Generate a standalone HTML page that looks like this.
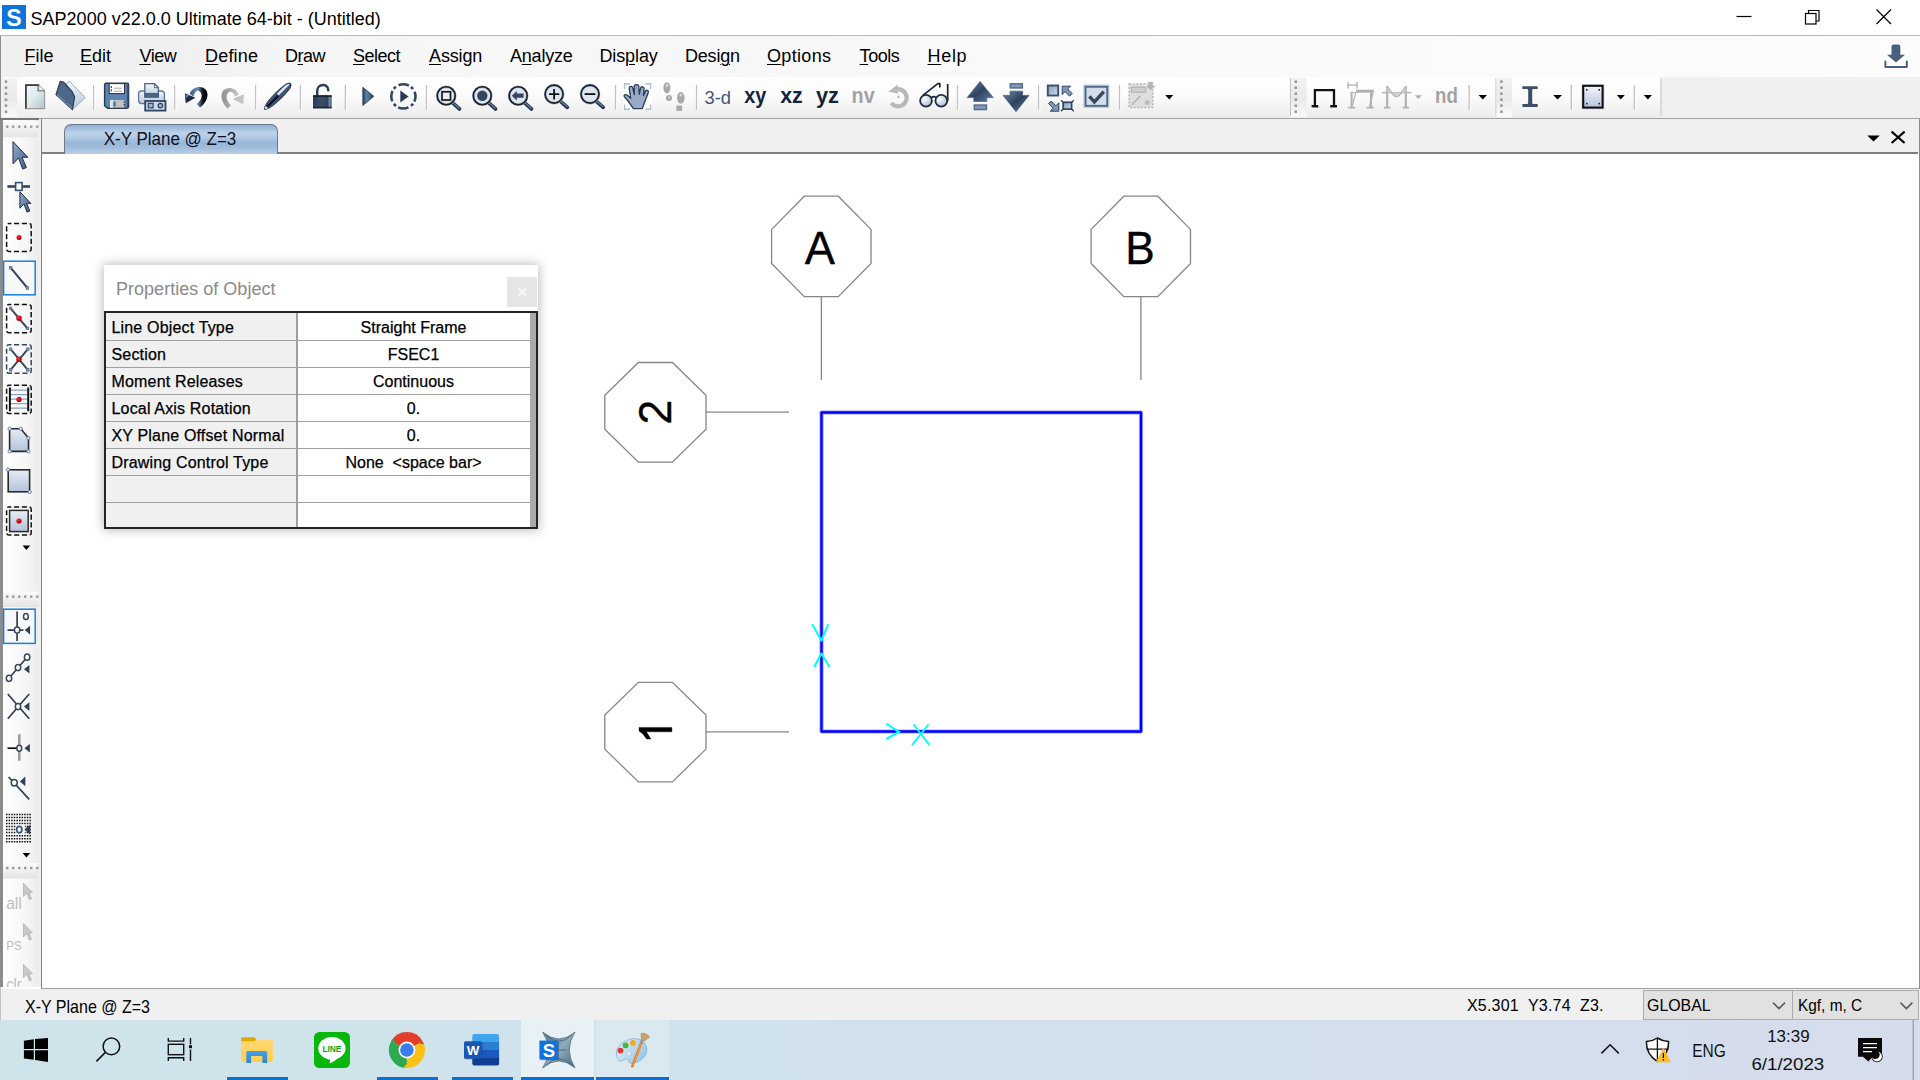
<!DOCTYPE html>
<html>
<head>
<meta charset="utf-8">
<title>SAP2000</title>
<style>
*{box-sizing:border-box;margin:0;padding:0}
html,body{width:1920px;height:1080px;overflow:hidden;background:#fff;font-family:"Liberation Sans",sans-serif;}
.abs{position:absolute}
#root{position:absolute;left:0;top:0;width:1920px;height:1080px;overflow:hidden;background:#fff}
/* title bar */
#title{left:0;top:0;width:1920px;height:36px;background:#fff}
#title .txt{left:30.6px;top:7.6px;font-size:18px;line-height:22px;color:#000;white-space:nowrap;letter-spacing:0}
#appico{left:2px;top:5px;width:24px;height:24px;background:#0a74dc}
/* menu */
#menubar{left:0;top:35px;width:1920px;height:42px;background:linear-gradient(90deg,#f0f0f0 0,#f0f0f0 180px,#f6f6f6 300px,#fcfcfc 100%);border-top:1px solid #b9b9b9}
.mi{position:absolute;top:45px;font-size:18px;line-height:22px;color:#000;white-space:nowrap}
.mi u{text-decoration:underline;text-underline-offset:2px;text-decoration-thickness:1px}
/* toolbar */
#tbrow{left:0;top:77px;width:1920px;height:42px;background:#f0f0f0}
#tbline{left:0;top:117.6px;width:1920px;height:1.6px;background:#a3a3a3}
#tbstrip{left:3px;top:77px;width:1657px;height:41px;background:linear-gradient(180deg,#ffffff 0,#fbfbfb 45%,#ececec 100%)}
.sep{position:absolute;top:85px;width:1px;height:25px;background:#c4c4c4;box-shadow:1px 0 0 #fff}
/* left border */
#lborder{left:0;top:118px;width:2.5px;height:868.5px;background:#8c8c8c}
#rborder{left:1918.5px;top:118px;width:1.5px;height:871px;background:#8c8c8c}
/* tab strip */
#tabrow{left:0;top:119px;width:1920px;height:35px;background:#f0f0f0}
#lefttb{left:2.5px;top:118px;width:36px;height:868.5px;background:linear-gradient(90deg,#fefefe 0,#f7f7f7 60%,#ececec 100%);border-top:1.5px solid #8a8a8a}
#canvas{left:40.5px;top:118px;width:1878px;height:871px;background:#fff;border-left:1.5px solid #808080;border-bottom:1.5px solid #a0a0a0}
#tabbg{left:42px;top:118px;width:1878px;height:34.5px;background:#f0f0f0}
#lthin{left:0;top:36px;width:1px;height:82px;background:#8e8e8e}
#lthin2{left:0;top:986.5px;width:1px;height:33.5px;background:#c2c2c2}
#ltline{left:0;top:117.8px;width:38.5px;height:1.8px;background:#777}
#status{left:0;top:989px;width:1920px;height:31px;background:#f0f0f0}
#taskbar{left:0;top:1020px;width:1920px;height:60px;background:linear-gradient(90deg,#cfe4ea 0,#d0e2ec 40%,#d6dcec 100%)}

/* tab */
#tab{left:63.5px;top:123.5px;width:214px;height:30.5px;border:1.3px solid #6e7a88;border-bottom:none;border-radius:7px 7px 0 0;background:linear-gradient(180deg,#8eafd3 0,#bcd2e9 27%,#b5cde6 40%,#98b6d8 62%,#a2bedd 80%,#b9cfe7 100%)}
#tab .t{left:-1px;top:4px;width:212px;text-align:center;font-size:18.6px;line-height:20px;color:#10101c;transform:scaleX(.914)}
#tabline{left:42px;top:152px;width:1876px;height:1.7px;background:#808080}
/* drawing */
#draw{left:0;top:0;width:1920px;height:1080px;pointer-events:none}
.glab{position:absolute;-webkit-text-stroke:.35px #000;font-size:46.5px;line-height:50px;width:60px;height:50px;text-align:center;color:#000}
/* properties panel */
#pp{left:104px;top:265px;width:434px;height:264px;background:#fff;box-shadow:0 0 10px 1px rgba(0,0,0,.27)}
#pp .ttl{left:12px;top:12.5px;font-size:18px;line-height:22px;color:#8a8a8a;white-space:nowrap;letter-spacing:.02px}
#pp .cls{left:403.2px;top:12.2px;width:29.6px;height:29.6px;background:#e5e5e5;color:#f6f6f6;font-size:18px;font-weight:700;line-height:30.6px;text-align:center}
#grid{left:0;top:46px;width:434px;height:218px;background:#242424}
#grid .lc{left:2px;top:2px;width:190px;height:214px;background:#f0f0f0}
#grid .rc{left:193px;top:2px;width:233px;height:214px;background:#fff}
#grid .sb{left:426px;top:2px;width:6px;height:214px;background:#aaa}
#grid .vl{left:192px;top:2px;width:1.5px;height:214px;background:#a0a0a0}
#grid .hl{left:2px;width:425px;height:1.5px;background:#a0a0a0}
.pl,.pr{position:absolute;font-size:16px;line-height:20px;color:#000;white-space:pre;-webkit-text-stroke:.25px #000}
.pl{left:7.5px;letter-spacing:.17px}
.pr{left:193px;width:233px;text-align:center}
/* status */
.st{position:absolute;font-size:16px;line-height:20px;color:#000;white-space:pre}
.combo{position:absolute;top:989.5px;height:30.5px;background:#e1e1e1;border:1.5px solid #ababab;border-bottom-width:1px}
#gap{left:38.5px;top:119.2px;width:2px;height:867px;background:#f0f0f0}
</style>
</head>
<body>
<div id="root">
<div id="title" class="abs">
  <div class="txt abs">SAP2000 v22.0.0 Ultimate 64-bit - (Untitled)</div>
</div>
<div id="menubar" class="abs"></div>
<div class="mi" style="left:24.5px;letter-spacing:0.00px"><u>F</u>ile</div>
<div class="mi" style="left:80.0px;letter-spacing:0.00px"><u>E</u>dit</div>
<div class="mi" style="left:139.5px;letter-spacing:-0.50px"><u>V</u>iew</div>
<div class="mi" style="left:205.0px;letter-spacing:0.20px"><u>D</u>efine</div>
<div class="mi" style="left:285.0px;letter-spacing:-0.50px">D<u>r</u>aw</div>
<div class="mi" style="left:353.0px;letter-spacing:-0.50px"><u>S</u>elect</div>
<div class="mi" style="left:429.0px;letter-spacing:-0.14px"><u>A</u>ssign</div>
<div class="mi" style="left:510.0px;letter-spacing:-0.22px">A<u>n</u>alyze</div>
<div class="mi" style="left:599.4px;letter-spacing:-0.10px">Dis<u>p</u>lay</div>
<div class="mi" style="left:685.0px;letter-spacing:-0.20px">Desi<u>g</u>n</div>
<div class="mi" style="left:767.0px;letter-spacing:0.33px"><u>O</u>ptions</div>
<div class="mi" style="left:859.6px;letter-spacing:-0.45px"><u>T</u>ools</div>
<div class="mi" style="left:927.5px;letter-spacing:0.70px"><u>H</u>elp</div>
<div id="tbrow" class="abs"></div>
<div id="tbstrip" class="abs"></div>
<div id="canvas" class="abs"></div>
<div id="tabbg" class="abs"></div>
<div id="lborder" class="abs"></div>
<div id="rborder" class="abs"></div>
<div id="lefttb" class="abs"></div>
<div id="gap" class="abs"></div>
<div id="status" class="abs"></div>
<div id="tabline" class="abs"></div><div id="tab" class="abs"><div class="t abs">X-Y Plane @ Z=3</div></div>
<svg id="draw" class="abs" width="1920" height="1080" viewBox="0 0 1920 1080">
<g fill="none" stroke="#858585" stroke-width="1.3">
<polygon points="804.30,196.20 838.30,196.20 871.00,229.40 871.00,263.40 838.30,296.60 804.30,296.60 771.60,263.40 771.60,229.40"/>
<polygon points="1123.80,196.20 1157.80,196.20 1190.50,229.40 1190.50,263.40 1157.80,296.60 1123.80,296.60 1091.10,263.40 1091.10,229.40"/>
<polygon points="638.40,362.50 672.40,362.50 706.00,395.30 706.00,429.30 672.40,462.10 638.40,462.10 604.80,429.30 604.80,395.30"/>
<polygon points="638.40,682.30 672.40,682.30 706.00,715.10 706.00,749.10 672.40,781.90 638.40,781.90 604.80,749.10 604.80,715.10"/>
<path d="M821.4 296.5V380 M1140.9 296.5V380 M706 412.2H789 M706 731.8H789"/>
</g>
<rect x="821.5" y="412.5" width="319.5" height="319" fill="none" stroke="#0000ff" stroke-opacity=".38" stroke-width="4.2" stroke-linejoin="round"/><rect x="821.5" y="412.5" width="319.5" height="319" fill="none" stroke="#0000ff" stroke-width="2.3" stroke-linejoin="round"/>
<path d="M639 727.4H671.9V731.8H646.3Q648.7 735.4 650.9 739H646.6Q643.8 733.7 639 731Z" fill="#000" stroke="#000" stroke-width=".4"/>
<g fill="none" stroke="#00ffff" stroke-width="2" stroke-linecap="round">
<path d="M812.5 624.8L821.3 640.5 M828 624.8L821.3 640.5"/>
<path d="M814.6 666.3L821.3 653.5 M829.2 666.3L821.3 653.5"/>
<path d="M887 724.2L899 732L887 738.5"/>
<path d="M914 725L929 744.5 M928 725L912.5 744.5"/>
</g>
</svg>
<div class="glab" style="left:790.3px;top:222.6px;transform:scaleX(.975)">A</div>
<div class="glab" style="left:1109.8px;top:222.6px;transform:scaleX(.95)">B</div>
<div class="glab" style="left:625px;top:387px;transform:rotate(-90deg) scaleX(.96)">2</div>
<div id="pp" class="abs"><div class="ttl abs">Properties of Object</div><div class="cls abs">&#215;</div><div id="grid" class="abs"><div class="lc abs"></div><div class="rc abs"></div><div class="sb abs"></div><div class="vl abs"></div><div class="hl abs" style="top:28.9px"></div><div class="hl abs" style="top:55.9px"></div><div class="hl abs" style="top:82.9px"></div><div class="hl abs" style="top:109.9px"></div><div class="hl abs" style="top:136.9px"></div><div class="hl abs" style="top:163.9px"></div><div class="hl abs" style="top:190.9px"></div><div class="pl" style="top:7.2px">Line Object Type</div><div class="pr" style="top:7.2px">Straight Frame</div><div class="pl" style="top:34.2px">Section</div><div class="pr" style="top:34.2px">FSEC1</div><div class="pl" style="top:61.2px">Moment Releases</div><div class="pr" style="top:61.2px">Continuous</div><div class="pl" style="top:88.2px">Local Axis Rotation</div><div class="pr" style="top:88.2px">0.</div><div class="pl" style="top:115.2px">XY Plane Offset Normal</div><div class="pr" style="top:115.2px">0.</div><div class="pl" style="top:142.2px">Drawing Control Type</div><div class="pr" style="top:142.2px">None  &lt;space bar&gt;</div></div></div>
<div class="st" style="left:24.8px;top:997.2px;font-size:17.7px;transform-origin:0 0;transform:scaleX(.905)">X-Y Plane @ Z=3</div>
<div class="st" style="left:1467px;top:996px;letter-spacing:.2px">X5.301  Y3.74  Z3.</div>
<div class="combo" style="left:1643px;width:150px"></div><div class="combo" style="left:1791.5px;width:127px"></div>
<div class="st" style="left:1647px;top:995.4px;font-size:17.4px;transform-origin:0 0;transform:scaleX(.915)">GLOBAL</div>
<div class="st" style="left:1798.4px;top:995.4px;font-size:17.4px;transform-origin:0 0;transform:scaleX(.885)">Kgf, m, C</div>
<svg class="abs" style="left:1760px;top:995px" width="160" height="20" viewBox="1760 995 160 20"><path d="M1773 1002.6L1779 1008.6L1785 1002.6 M1900.4 1002.6L1906.4 1008.6L1912.4 1002.6" fill="none" stroke="#5a5a5a" stroke-width="1.5"/></svg>
<div id="taskbar" class="abs"></div>
<div id="tbline" class="abs"></div><div id="ltline" class="abs"></div><div id="lthin" class="abs"></div><div id="lthin2" class="abs"></div>
<svg class="abs" style="left:0;top:0" width="1920" height="160" viewBox="0 0 1920 160">
<defs>
<linearGradient id="gDoc" x1="0" y1="0" x2="1" y2="1"><stop offset="0" stop-color="#f2f8f9"/><stop offset=".5" stop-color="#dde9ec"/><stop offset="1" stop-color="#a9c4cb"/></linearGradient>
<linearGradient id="gBlue" x1="0" y1="0" x2="1" y2="1"><stop offset="0" stop-color="#7f9abd"/><stop offset="1" stop-color="#d3deeb"/></linearGradient>
<linearGradient id="gBlueV" x1="0" y1="0" x2="0" y2="1"><stop offset="0" stop-color="#f4f7fb"/><stop offset="1" stop-color="#b4c5db"/></linearGradient>
<linearGradient id="gArr" x1="0" y1="0" x2="1" y2="1"><stop offset="0" stop-color="#6c88ad"/><stop offset=".5" stop-color="#2f425b"/><stop offset="1" stop-color="#6480a6"/></linearGradient>
<linearGradient id="gUndo" x1="0" y1="0" x2="1" y2="0"><stop offset="0" stop-color="#3b5578"/><stop offset=".45" stop-color="#6f91bb"/><stop offset=".75" stop-color="#0a0f18"/><stop offset="1" stop-color="#000"/></linearGradient>
<linearGradient id="gRedo" x1="0" y1="0" x2="1" y2="0"><stop offset="0" stop-color="#8f8f8f"/><stop offset="1" stop-color="#c9c9c9"/></linearGradient>
<linearGradient id="gPlay" x1="0" y1="0" x2="1" y2="0"><stop offset="0" stop-color="#2c3f59"/><stop offset=".35" stop-color="#5d7fa9"/><stop offset="1" stop-color="#2c3f59"/></linearGradient>
<linearGradient id="gLock" x1="0" y1="0" x2="1" y2="0"><stop offset="0" stop-color="#2a3b52"/><stop offset=".45" stop-color="#3b4f6b"/><stop offset=".8" stop-color="#2f425b"/><stop offset=".88" stop-color="#7490b4"/><stop offset="1" stop-color="#3a4f6c"/></linearGradient>
<linearGradient id="gGrip" x1="0" y1="0" x2="0" y2="1"><stop offset="0" stop-color="#f2f2f2"/><stop offset=".55" stop-color="#e9e9e9"/><stop offset="1" stop-color="#fafafa"/></linearGradient>
<radialGradient id="gLens" cx=".35" cy=".35" r=".8"><stop offset="0" stop-color="#fff"/><stop offset="1" stop-color="#9fb4d0"/></radialGradient>
</defs>
<g stroke="#000" stroke-width="1.2" fill="none"><path d="M1736.5 16.5H1751.5"/><rect x="1805.5" y="13.5" width="10.5" height="10.5"/><path d="M1808.5 13.5V10.5H1819V21H1816"/><path d="M1876.5 9.5L1891 24 M1891 9.5L1876.5 24"/></g>
<rect x="2" y="5" width="24" height="24" fill="#0f73dd"/><text x="14" y="26" font-family="Liberation Sans" font-weight="700" font-size="23" fill="#fff" text-anchor="middle">S</text>
<rect x="1877" y="41" width="33" height="30" fill="#fdfdfd"/><g fill="#4a6081"><path d="M1891.5 46.5Q1891.5 44.4 1893.5 44.4H1898.3Q1900.3 44.4 1900.3 46.5V54.7H1905L1896 62.4L1887 54.7H1891.5Z"/></g><path d="M1885.4 61.5V66.9H1906.8V61.5" fill="none" stroke="#4a6081" stroke-width="2" stroke-linejoin="round" stroke-linecap="round"/>
<rect x="3" y="78" width="14" height="39" fill="url(#gGrip)"/>
<g fill="#8f8f8f"><rect x="4.8" y="80.5" width="2.4" height="2.4"/><rect x="4.8" y="86.5" width="2.4" height="2.4"/><rect x="4.8" y="92.5" width="2.4" height="2.4"/><rect x="4.8" y="98.5" width="2.4" height="2.4"/><rect x="4.8" y="104.5" width="2.4" height="2.4"/><rect x="4.8" y="110.5" width="2.4" height="2.4"/></g>
<rect x="1290" y="78" width="1" height="38" fill="#c4c4c4"/><rect x="1291" y="78" width="15.5" height="39" fill="url(#gGrip)"/>
<g fill="#8f8f8f"><rect x="1294.6" y="80.5" width="2.4" height="2.4"/><rect x="1294.6" y="86.5" width="2.4" height="2.4"/><rect x="1294.6" y="92.5" width="2.4" height="2.4"/><rect x="1294.6" y="98.5" width="2.4" height="2.4"/><rect x="1294.6" y="104.5" width="2.4" height="2.4"/><rect x="1294.6" y="110.5" width="2.4" height="2.4"/></g>
<rect x="1495.5" y="78" width="1" height="38" fill="#c4c4c4"/><rect x="1496.5" y="78" width="15.5" height="39" fill="url(#gGrip)"/>
<g fill="#8f8f8f"><rect x="1500.2" y="80.5" width="2.4" height="2.4"/><rect x="1500.2" y="86.5" width="2.4" height="2.4"/><rect x="1500.2" y="92.5" width="2.4" height="2.4"/><rect x="1500.2" y="98.5" width="2.4" height="2.4"/><rect x="1500.2" y="104.5" width="2.4" height="2.4"/><rect x="1500.2" y="110.5" width="2.4" height="2.4"/></g>
<rect x="1660.5" y="79" width="1" height="37" fill="#c4c4c4"/>
<rect x="93.0" y="84.8" width="1.4" height="25" fill="#c2c2c2"/><rect x="94.4" y="84.8" width="1.2" height="25" fill="#fdfdfd"/>
<rect x="174.1" y="84.8" width="1.4" height="25" fill="#c2c2c2"/><rect x="175.5" y="84.8" width="1.2" height="25" fill="#fdfdfd"/>
<rect x="255.0" y="84.8" width="1.4" height="25" fill="#c2c2c2"/><rect x="256.4" y="84.8" width="1.2" height="25" fill="#fdfdfd"/>
<rect x="299.8" y="84.8" width="1.4" height="25" fill="#c2c2c2"/><rect x="301.2" y="84.8" width="1.2" height="25" fill="#fdfdfd"/>
<rect x="344.7" y="84.8" width="1.4" height="25" fill="#c2c2c2"/><rect x="346.1" y="84.8" width="1.2" height="25" fill="#fdfdfd"/>
<rect x="425.9" y="84.8" width="1.4" height="25" fill="#c2c2c2"/><rect x="427.3" y="84.8" width="1.2" height="25" fill="#fdfdfd"/>
<rect x="614.9" y="84.8" width="1.4" height="25" fill="#c2c2c2"/><rect x="616.3" y="84.8" width="1.2" height="25" fill="#fdfdfd"/>
<rect x="695.9" y="84.8" width="1.4" height="25" fill="#c2c2c2"/><rect x="697.3" y="84.8" width="1.2" height="25" fill="#fdfdfd"/>
<rect x="956.9" y="84.8" width="1.4" height="25" fill="#c2c2c2"/><rect x="958.3" y="84.8" width="1.2" height="25" fill="#fdfdfd"/>
<rect x="1038.0" y="84.8" width="1.4" height="25" fill="#c2c2c2"/><rect x="1039.4" y="84.8" width="1.2" height="25" fill="#fdfdfd"/>
<rect x="1118.9" y="84.8" width="1.4" height="25" fill="#c2c2c2"/><rect x="1120.3" y="84.8" width="1.2" height="25" fill="#fdfdfd"/>
<rect x="1468.5" y="84.8" width="1.4" height="25" fill="#c2c2c2"/><rect x="1469.9" y="84.8" width="1.2" height="25" fill="#fdfdfd"/>
<rect x="1570.6" y="84.8" width="1.4" height="25" fill="#c2c2c2"/><rect x="1572.0" y="84.8" width="1.2" height="25" fill="#fdfdfd"/>
<rect x="1633.7" y="84.8" width="1.4" height="25" fill="#c2c2c2"/><rect x="1635.1" y="84.8" width="1.2" height="25" fill="#fdfdfd"/>
<path d="M25.8 85H38.4L44.6 90.6V108.6H25.8Z" fill="url(#gDoc)" stroke="#9a9a9a" stroke-width="1.1"/><path d="M44.3 108.7H25.9V85.2H38.4V90.4H44.3" fill="none" stroke="#3c3c3c" stroke-width="1.6" stroke-opacity=".0"/>
<path d="M25.9 108.6V85.1H38.5V90.3H44.4" fill="none" stroke="#3a3a3a" stroke-width="1.7"/><path d="M38.8 85.4L44.3 90.3H38.8Z" fill="#f6f9fa" stroke="#b5b5b5" stroke-width=".7"/>
<path d="M66 84L69.3 81.2L85.3 97.6L72.3 109.8L74.3 97Z" fill="url(#gBlueV)" stroke="#8fa5c2" stroke-width=".9"/>
<path d="M60.2 81.4L63.5 82L71.9 91.3L74.6 96.8L72.4 109.6L56 94.6Z" fill="#4e6788" stroke="#2c3e57" stroke-width="1.2" stroke-linejoin="round"/><path d="M57.5 95L72 108" stroke="#6c88ad" stroke-width="1.3"/>
<path d="M104.6 84.5Q104.6 83.2 106 83.2H127Q128.6 83.2 128.6 84.8V106.8Q128.6 108.2 127 108.2H107.5L104.6 105.6Z" fill="#5c84b3" stroke="#2a3a4e" stroke-width="1.4"/>
<rect x="109.2" y="83.6" width="15.3" height="10" fill="#fff" stroke="#2f2f2f" stroke-width="1"/><path d="M114 88.2H122 M114 91.2H122" stroke="#a8a8a8" stroke-width="1"/><path d="M111.3 86V92.5" stroke="#555" stroke-width="1.4" stroke-dasharray="2 1.2"/>
<rect x="110" y="100" width="14.5" height="7.6" fill="#c3c3c3"/><rect x="110" y="100" width="3" height="7.6" fill="#e4e4e4"/><rect x="113.2" y="101.6" width="2.6" height="5" fill="#4d7ab0"/><path d="M124.3 101.5V107" stroke="#2a3a4e" stroke-width="1.2" stroke-dasharray="1.4 1.2"/>
<path d="M127.6 84.5V107.5" stroke="#3a5273" stroke-width="1.6"/>
<rect x="138.6" y="91" width="25.8" height="12.6" rx="3" fill="url(#gBlueV)" stroke="#5a7698" stroke-width="1.3"/>
<path d="M144.8 97V83.6H154.5L158.4 87.6V97Z" fill="url(#gBlueV)" stroke="#4a6486" stroke-width="1.3"/><path d="M154.4 83.8V87.7H158.2" fill="none" stroke="#4a6486" stroke-width="1"/>
<rect x="144.3" y="92.9" width="14.4" height="4.6" fill="#4a6384"/>
<rect x="145.2" y="101" width="20.3" height="9.6" fill="#cdd9e8" stroke="#2e4563" stroke-width="1.8"/><rect x="148.3" y="103.3" width="4.8" height="4.6" fill="#9fb3cf" stroke="#2e4563" stroke-width="1.2"/><circle cx="160.4" cy="105.6" r="2.3" fill="#9fb3cf" stroke="#2e4563" stroke-width="1.2"/>
<path d="M189.6 93.8C192.5 87 201 85 205.6 89.6C209.6 94 207.2 102.4 200 107.6L196.8 104C201.4 100 203 95.4 200.4 92.2C198 89.4 194.8 91 193.4 96.4Z" fill="url(#gUndo)"/><path d="M184.9 93.2L185.7 103.2L195.4 97.8Z" fill="#1b2a40"/><path d="M185.5 94.6L189.6 95L186.2 98.2Z" fill="#5f80aa"/>
<path d="M239 94.6C236 87.6 227.6 86 223.4 90.6C219.6 95 221.8 103.2 227.6 108.6L231 105.4C226.6 101 225.6 96 228 93C230.4 90.4 233.8 92.2 235 96.8Z" fill="url(#gRedo)"/><path d="M244 94.3L243.2 104.2L232.6 99Z" fill="#c4c4c4"/>
<g transform="rotate(-44.5 277.5 96.5)"><path d="M259 96.5Q262 93.7 270 92.9Q283 91.9 292 93.5Q296 94.9 296 96.5Q296 98.1 292 99.5Q283 101.1 270 100.1Q262 99.3 259 96.5Z" fill="#3d5474" stroke="#2a3b55" stroke-width=".9"/><path d="M263 96.5H279" stroke="#0d141f" stroke-width="2.2"/><path d="M279 94.2Q287 93.4 292.5 94.4Q294.6 95.3 294.6 96.5H279Z" fill="#dfe7f1"/><path d="M259.3 96.5L262.5 94.8V98.2Z" fill="#dfe6ef"/></g>
<path d="M317.2 96V91.2C317.2 83.2 328.3 83.2 328.3 90.2" fill="none" stroke="#2d4059" stroke-width="2.5" stroke-linecap="round"/><rect x="313" y="95.3" width="18.6" height="13" fill="url(#gLock)"/><rect x="313" y="95.3" width="18.6" height="1.6" fill="#141d2b"/><rect x="313" y="106.8" width="18.6" height="1.5" fill="#1a2536"/>
<path d="M362.8 87.3V105.6L373.9 96.3Z" fill="url(#gPlay)" stroke="#2c3e57" stroke-width=".8" stroke-linejoin="round"/>
<circle cx="403.4" cy="96.4" r="12.1" fill="none" stroke="#33465f" stroke-width="2.6" stroke-dasharray="10.6 2.5 2.9 3.0" stroke-dashoffset="5.3"/><path d="M400.3 90.4V102.6L408.6 96.4Z" fill="#2a3b52"/>
<path d="M452.4 102.7L459.4 108.9" stroke="#27374d" stroke-width="3.8" stroke-linecap="round"/><path d="M453.2 102.9L459.2 108.2" stroke="#6182ab" stroke-width="1.2" stroke-linecap="round"/>
<circle cx="446.2" cy="95.7" r="9" fill="#dde5f0" stroke="#9bb0cc" stroke-width="2.6"/><circle cx="446.2" cy="95.7" r="9" fill="none" stroke="#1e1e1e" stroke-width="1.6"/>
<rect x="442" y="91.8" width="8.5" height="8.2" fill="#e9eef5" stroke="#1a1a1a" stroke-width="1.7"/>
<path d="M488.5 102.7L495.5 108.9" stroke="#27374d" stroke-width="3.8" stroke-linecap="round"/><path d="M489.3 102.9L495.3 108.2" stroke="#6182ab" stroke-width="1.2" stroke-linecap="round"/>
<circle cx="482.3" cy="95.7" r="9" fill="#dde5f0" stroke="#9bb0cc" stroke-width="2.6"/><circle cx="482.3" cy="95.7" r="9" fill="none" stroke="#1e1e1e" stroke-width="1.6"/>
<circle cx="482.3" cy="95.7" r="5.2" fill="#34475f"/>
<path d="M524.4 102.7L531.4 108.9" stroke="#27374d" stroke-width="3.8" stroke-linecap="round"/><path d="M525.2 102.9L531.2 108.2" stroke="#6182ab" stroke-width="1.2" stroke-linecap="round"/>
<circle cx="518.2" cy="95.7" r="9" fill="#dde5f0" stroke="#9bb0cc" stroke-width="2.6"/><circle cx="518.2" cy="95.7" r="9" fill="none" stroke="#1e1e1e" stroke-width="1.6"/>
<path d="M511.8 95.7L516.8 91V93.6H523.6V97.8H516.8V100.4Z" fill="#34475f"/>
<path d="M560.3 101.1L567.3 107.3" stroke="#27374d" stroke-width="3.8" stroke-linecap="round"/><path d="M561.1 101.3L567.1 106.6" stroke="#6182ab" stroke-width="1.2" stroke-linecap="round"/>
<circle cx="554.1" cy="94.1" r="9" fill="#dde5f0" stroke="#9bb0cc" stroke-width="2.6"/><circle cx="554.1" cy="94.1" r="9" fill="none" stroke="#1e1e1e" stroke-width="1.6"/>
<path d="M549 94.1H559.3 M554.1 88.9V99.4" stroke="#111" stroke-width="1.8"/>
<path d="M596.2 101.1L603.2 107.3" stroke="#27374d" stroke-width="3.8" stroke-linecap="round"/><path d="M597.0 101.3L603.0 106.6" stroke="#6182ab" stroke-width="1.2" stroke-linecap="round"/>
<circle cx="590" cy="94.1" r="9" fill="#dde5f0" stroke="#9bb0cc" stroke-width="2.6"/><circle cx="590" cy="94.1" r="9" fill="none" stroke="#1e1e1e" stroke-width="1.6"/>
<path d="M584.6 94.1H595.4" stroke="#111" stroke-width="1.8"/>
<rect x="623" y="82.6" width="29" height="27.6" fill="#fff"/><g fill="none" stroke="#a9bdd6" stroke-width="1.4"><path d="M624.6 89V83.8H630"/><path d="M645.5 83.8H650.6V89"/><path d="M624.6 104.5V109.3H630"/><path d="M645.5 109.3H650.6V104.5"/></g>
<path d="M633.5 108.6L628 101L624.3 96.6C623.5 95 625.5 94 627 95L630.7 98.3L629.2 88.5C629 86 632.2 85.6 632.8 88L634.4 94.5L634.3 86.5C634.3 84 638.6 84 638.8 86.5L639.3 94.4L640.6 88.2C641 86 644.3 86.4 644.1 88.8L643.4 95.6L645.4 91.2C646.3 89.3 648.9 90.3 648.3 92.4L645.3 100.5L642.3 108.6Z" fill="#97abc7" stroke="#2c3e57" stroke-width="1.3" stroke-linejoin="round"/>
<g fill="#a9a9a9"><ellipse cx="666.9" cy="87.8" rx="3.5" ry="5.6"/><ellipse cx="669" cy="98" rx="3.1" ry="2.9"/><ellipse cx="680.8" cy="97.8" rx="3.8" ry="5.9"/><rect x="676.3" y="105.6" width="5.8" height="5.4" rx="1"/></g><g fill="#ddd"><ellipse cx="667" cy="85.3" rx="1.2" ry="1.6"/><ellipse cx="680.8" cy="95" rx="1.2" ry="1.6"/><circle cx="669.4" cy="97.2" r="1"/></g>
<text x="704.5" y="103.5" font-family="Liberation Sans" font-size="19" font-weight="400" fill="#44597a" textLength="26.5" lengthAdjust="spacingAndGlyphs">3-d</text>
<text x="744.2" y="103.3" font-family="Liberation Sans" font-size="22" font-weight="700" fill="#12253d" textLength="22.0" lengthAdjust="spacingAndGlyphs">xy</text>
<text x="780.2" y="103.3" font-family="Liberation Sans" font-size="22" font-weight="700" fill="#12253d" textLength="22.6" lengthAdjust="spacingAndGlyphs">xz</text>
<text x="816" y="103.3" font-family="Liberation Sans" font-size="22" font-weight="700" fill="#12253d" textLength="23.0" lengthAdjust="spacingAndGlyphs">yz</text>
<text x="851.6" y="103.3" font-family="Liberation Sans" font-size="22" font-weight="700" fill="#a2a2a2" textLength="23.0" lengthAdjust="spacingAndGlyphs">nv</text>
<text x="1435" y="103.2" font-family="Liberation Sans" font-size="21.5" font-weight="700" fill="#a2a2a2" textLength="22.8" lengthAdjust="spacingAndGlyphs">nd</text>
<path d="M893.5 90.5A8.6 8.6 0 1 1 891.2 103" fill="none" stroke="#b8b8b8" stroke-width="4.2"/><path d="M888.5 91.8L897.5 84.5L898 93.5Z" fill="#b8b8b8"/><circle cx="898.4" cy="97" r="1.4" fill="#c4c4c4"/>
<g fill="url(#gLens)" stroke="#1f2d42" stroke-width="1.8"><circle cx="926" cy="100.7" r="5.9"/><circle cx="941.3" cy="100.7" r="5.9"/></g><g fill="none" stroke="#1a2536" stroke-width="1.7" stroke-linejoin="round"><path d="M922.6 95.6L937.8 83.6H939.8V87.4"/><path d="M947.7 84V101"/><path d="M931.5 97.5Q933.6 95.6 935.8 97.5"/></g>
<path d="M980.1 81.4L993.2 97.6H986.8V101.4H973.8V97.6H967.2Z" fill="url(#gArr)" stroke="#4a6385" stroke-width=".8" stroke-linejoin="round"/><rect x="974.3" y="105" width="12.2" height="4.6" fill="#8097b6" stroke="#4d6788" stroke-width="1.3"/>
<rect x="1010.2" y="83.8" width="12.2" height="4.2" fill="#8097b6" stroke="#4d6788" stroke-width="1.3"/><path d="M1010 91.2H1022.6V95.4H1029L1016 111.7L1003.1 95.4H1010Z" fill="url(#gArr)" stroke="#4a6385" stroke-width=".8" stroke-linejoin="round"/>
<rect x="1047.8" y="85.5" width="10.4" height="10" fill="url(#gBlue)" stroke="#3a5070" stroke-width="1.9"/>
<path d="M1062.2 86.2H1070.6L1067.6 88.9L1072.2 93.6L1069.6 96.2L1065 91.5L1062.2 94.6Z" fill="#7d97b9" stroke="#2f435e" stroke-width="1"/>
<path d="M1058.8 111.2H1050.2L1053.2 108.3L1048.6 103.6L1051.2 101L1055.8 105.8L1058.8 102.8Z" fill="#7d97b9" stroke="#2f435e" stroke-width="1"/>
<rect x="1063.2" y="102.3" width="8.4" height="6.8" fill="url(#gBlue)" stroke="#2f435e" stroke-width="1.7"/><path d="M1061 100.2L1063 102.2 M1073.8 100.2L1071.8 102.2 M1061 111.2L1063 109.2 M1073.8 111.2L1071.8 109.2" stroke="#2f435e" stroke-width="1.3"/>
<rect x="1083.3" y="84.6" width="26.1" height="23.4" fill="#b9c9de"/><rect x="1085.6" y="86.8" width="21.6" height="19" fill="#d3dce9" stroke="#4d6788" stroke-width="1.8"/><path d="M1089.4 96.4L1094.4 102L1103.8 91.6" fill="none" stroke="#34475f" stroke-width="3.4"/>
<rect x="1129" y="83.9" width="23.8" height="23.8" fill="#dedede" stroke="#b3b3b3" stroke-width="1.3" stroke-dasharray="2 1.6"/><rect x="1131.6" y="87.2" width="14" height="5" fill="#d0d0d0" stroke="#b5b5b5" stroke-width="1.3"/><path d="M1131.8 104.8L1140.6 95.8" stroke="#b5b5b5" stroke-width="1.6"/><circle cx="1147.2" cy="102.6" r="2.5" fill="#bdbdbd"/><path d="M1143 91L1158 91L1158 80L1143 80Z" fill="#fafafa" fill-opacity="0"/><path d="M1147.8 81.6H1153.2V85.4H1156.6L1150.5 90.8L1144.4 85.4H1147.8Z" fill="#b4b4b4" stroke="#f6f6f6" stroke-width=".8"/>
<path d="M1165.2 95H1173.2L1169.2 99.5Z" fill="#000"/>
<path d="M1414.6 95.2H1422L1418.3 98.9Z" fill="#b0b0b0"/>
<path d="M1478.6 95H1487L1482.8 99.5Z" fill="#000"/>
<path d="M1553.2 95H1562L1557.6 99.5Z" fill="#000"/>
<path d="M1616.8 95H1624.8L1620.8 99.5Z" fill="#000"/>
<path d="M1643.8 95H1652L1647.9 99.5Z" fill="#000"/>
<path d="M1312.5 107.3H1319 M1330.2 107.3H1337" stroke="#9db3d1" stroke-width="1.3"/><path d="M1311.6 106.2H1318.2 M1314.9 106.2V90.1H1334V106.2 M1330.2 106.2H1337" fill="none" stroke="#111" stroke-width="2.3"/>
<g fill="none" stroke="#b0b0b0"><path d="M1348 82V88.6 M1357 82V88.6 M1348 85.2H1357" stroke-width="1.3"/><path d="M1356 91.2H1373.8" stroke-width="3"/><path d="M1351.6 92.4V107 M1371 92.4V107" stroke-width="2"/><path d="M1350.5 92.5H1356 M1355.8 92.6L1352.2 106 M1373.2 92.6L1369.6 106" stroke-width="1.1"/><path d="M1348.2 107.6H1355.2 M1366.6 107.6H1373.6" stroke-width="1.8"/></g>
<g fill="none" stroke="#b2b2b2"><path d="M1387.2 86.2V107 M1405.8 86.2V107" stroke-width="2.2"/><path d="M1381.8 92.6H1411.4" stroke-width="1.4"/><path d="M1387.2 86.5L1393 94.4Q1396.5 98.6 1400 94.4L1405.8 86.5" stroke-width="1.6"/><path d="M1384 107.6H1390.4 M1402.6 107.6H1409" stroke-width="1.8"/></g><path d="M1391.5 92.6H1401.5Q1396.5 99 1391.5 92.6Z" fill="#d2d2d2"/><path d="M1387.2 86.5L1391.5 92.4H1387.2Z M1405.8 86.5L1401.5 92.4H1405.8Z" fill="#cfcfcf"/>
<path d="M1522.4 86.2H1537.7V89H1533.4Q1532.2 89 1532.2 90.2V102.8Q1532.2 104 1533.4 104H1537.7V106.9H1522.4V104H1527Q1528.2 104 1528.2 102.8V90.2Q1528.2 89 1527 89H1522.4Z" fill="#3d4f66"/>
<rect x="1581.4" y="84" width="23" height="25.4" fill="#c4d3e6" fill-opacity=".7"/><rect x="1583.2" y="85.8" width="19.4" height="21.8" fill="url(#gBlueV)" stroke="#111" stroke-width="2.1"/><g fill="#222"><rect x="1586" y="89" width="1.6" height="1.6"/><rect x="1598.4" y="89" width="1.6" height="1.6"/><rect x="1586" y="102.8" width="1.6" height="1.6"/><rect x="1598.4" y="102.8" width="1.6" height="1.6"/></g>
<path d="M1867.3 135.4H1879.8L1873.5 141.6Z" fill="#000"/><path d="M1891.6 131.6L1904.6 143 M1904.6 131.6L1891.6 143" stroke="#000" stroke-width="2.1"/>
</svg>

<svg class="abs" style="left:0;top:118px" width="42" height="868.5" viewBox="0 118 42 868.5">
<defs>
<linearGradient id="lPtr" x1="0" y1="0" x2="1" y2="1"><stop offset="0" stop-color="#94adcc"/><stop offset="1" stop-color="#3f5b82"/></linearGradient>
<linearGradient id="lFill" x1="0" y1="0" x2="0" y2="1"><stop offset="0" stop-color="#e6ecf4"/><stop offset="1" stop-color="#b3c3da"/></linearGradient>
<radialGradient id="lRed" cx=".4" cy=".35" r=".7"><stop offset="0" stop-color="#f04848"/><stop offset=".5" stop-color="#d80010"/><stop offset="1" stop-color="#a8000c"/></radialGradient>
<linearGradient id="lBand" x1="0" y1="0" x2="0" y2="1"><stop offset="0" stop-color="#fbfbfb"/><stop offset="1" stop-color="#e4e4e4"/></linearGradient>
</defs>
<rect x="3" y="121.7" width="35" height="15.5" fill="url(#lBand)"/>
<g fill="#9a9a9a"><rect x="6" y="125.5" width="2.4" height="2.4"/><rect x="12" y="125.5" width="2.4" height="2.4"/><rect x="18" y="125.5" width="2.4" height="2.4"/><rect x="24" y="125.5" width="2.4" height="2.4"/><rect x="30" y="125.5" width="2.4" height="2.4"/><rect x="36" y="125.5" width="2.4" height="2.4"/></g>
<rect x="3" y="591.6" width="35" height="15.5" fill="url(#lBand)"/>
<g fill="#9a9a9a"><rect x="6" y="595.4" width="2.4" height="2.4"/><rect x="12" y="595.4" width="2.4" height="2.4"/><rect x="18" y="595.4" width="2.4" height="2.4"/><rect x="24" y="595.4" width="2.4" height="2.4"/><rect x="30" y="595.4" width="2.4" height="2.4"/><rect x="36" y="595.4" width="2.4" height="2.4"/></g>
<rect x="3" y="863" width="35" height="15.5" fill="url(#lBand)"/>
<g fill="#9a9a9a"><rect x="6" y="866.8" width="2.4" height="2.4"/><rect x="12" y="866.8" width="2.4" height="2.4"/><rect x="18" y="866.8" width="2.4" height="2.4"/><rect x="24" y="866.8" width="2.4" height="2.4"/><rect x="30" y="866.8" width="2.4" height="2.4"/><rect x="36" y="866.8" width="2.4" height="2.4"/></g>
<path d="M13.0 141.6L13.0 163.8L18.6 157.9L22.6 169.0L26.4 167.6L22.0 157.2L27.8 157.3Z" fill="url(#lPtr)" stroke="#1f2d42" stroke-width="1" stroke-linejoin="round"/>
<path d="M7.4 186.5H30" stroke="#34475f" stroke-width="2.6"/><rect x="15.6" y="182.6" width="6.5" height="7.8" fill="#fff" stroke="#3a5070" stroke-width="1.6"/>
<path d="M19.9 191.8L19.9 208.2L24.0 203.9L27.0 212.1L29.8 211.0L26.6 203.3L30.9 203.4Z" fill="url(#lPtr)" stroke="#1f2d42" stroke-width="1" stroke-linejoin="round"/>
<rect x="6.6" y="223.5" width="24.6" height="27.9" rx="2.2" fill="none" stroke="#111" stroke-width="1.5" stroke-dasharray="5.2 2.6" stroke-dashoffset="2.6"/>
<circle cx="19" cy="237.6" r="2.5" fill="url(#lRed)"/>
<rect x="3.6" y="261.2" width="31.6" height="33.6" fill="#f8f8f8" stroke="#1c7fe0" stroke-width="1.5"/>
<path d="M10.6 267.7L27.4 288" stroke="#34475f" stroke-width="2"/>
<rect x="9.3" y="266.4" width="2.6" height="2.6" fill="#7c96b8" stroke="#4a6384" stroke-width=".6"/>
<rect x="26.1" y="286.7" width="2.6" height="2.6" fill="#7c96b8" stroke="#4a6384" stroke-width=".6"/>
<rect x="6.6" y="304.6" width="24.6" height="28.1" rx="2.2" fill="none" stroke="#111" stroke-width="1.5" stroke-dasharray="5.2 2.6" stroke-dashoffset="2.6"/>
<path d="M10.6 308.3L27.4 328.4" stroke="#34475f" stroke-width="2"/>
<rect x="9.3" y="307.0" width="2.6" height="2.6" fill="#7c96b8" stroke="#4a6384" stroke-width=".6"/>
<rect x="26.1" y="327.1" width="2.6" height="2.6" fill="#7c96b8" stroke="#4a6384" stroke-width=".6"/>
<circle cx="19" cy="318.3" r="2.7" fill="url(#lRed)"/>
<rect x="6.6" y="344.7" width="24.6" height="28.5" rx="2.2" fill="none" stroke="#34475f" stroke-width="1.5" stroke-dasharray="5.2 2.6" stroke-dashoffset="2.6"/>
<path d="M10.6 349.2L27.8 369.9 M27.8 349.2L10.6 369.9" stroke="#34475f" stroke-width="1.9"/>
<rect x="9.3" y="347.9" width="2.6" height="2.6" fill="#7c96b8" stroke="#4a6384" stroke-width=".6"/>
<rect x="26.5" y="368.6" width="2.6" height="2.6" fill="#7c96b8" stroke="#4a6384" stroke-width=".6"/>
<rect x="26.5" y="347.9" width="2.6" height="2.6" fill="#7c96b8" stroke="#4a6384" stroke-width=".6"/>
<rect x="9.3" y="368.6" width="2.6" height="2.6" fill="#7c96b8" stroke="#4a6384" stroke-width=".6"/>
<circle cx="19" cy="359.2" r="2.7" fill="url(#lRed)"/>
<rect x="6.6" y="385.3" width="24.6" height="28.2" rx="2.2" fill="none" stroke="#111" stroke-width="1.5" stroke-dasharray="5.2 2.6" stroke-dashoffset="2.6"/>
<path d="M10.5 390.1H27.5 M10.5 394.6H27.5 M10.5 399.1H27.5 M10.5 403.6H27.5 M10.5 408.1H27.5" stroke="#8aa3c4" stroke-width="1.3"/><path d="M9.9 387.6V411.2 M28.2 387.6V411.2" stroke="#111" stroke-width="2"/>
<circle cx="19" cy="399.4" r="2.6" fill="url(#lRed)"/>
<path d="M9.6 428.8H20.7L28.5 438V451.4H9.6Z" fill="url(#lFill)" stroke="#2b2b2b" stroke-width="1.6" stroke-linejoin="round"/>
<circle cx="9.6" cy="428.8" r="1.6" fill="#dfe7f1" stroke="#5f7da6" stroke-width=".9"/>
<circle cx="20.7" cy="428.8" r="1.6" fill="#dfe7f1" stroke="#5f7da6" stroke-width=".9"/>
<circle cx="28.5" cy="438" r="1.6" fill="#dfe7f1" stroke="#5f7da6" stroke-width=".9"/>
<circle cx="28.5" cy="451.4" r="1.6" fill="#dfe7f1" stroke="#5f7da6" stroke-width=".9"/>
<circle cx="9.6" cy="451.4" r="1.6" fill="#dfe7f1" stroke="#5f7da6" stroke-width=".9"/>
<rect x="8.2" y="469.8" width="21.4" height="22" fill="url(#lFill)" stroke="#2b2b2b" stroke-width="1.6"/>
<circle cx="8" cy="469.6" r="1.6" fill="#dfe7f1" stroke="#5f7da6" stroke-width=".9"/>
<circle cx="29.7" cy="491.9" r="1.6" fill="#dfe7f1" stroke="#5f7da6" stroke-width=".9"/>
<rect x="6.6" y="507.0" width="24.6" height="28.1" rx="2.2" fill="none" stroke="#111" stroke-width="1.5" stroke-dasharray="5.2 2.6" stroke-dashoffset="2.6"/>
<rect x="9.6" y="510.4" width="18.6" height="21.2" fill="url(#lFill)" stroke="#2b2b2b" stroke-width="1.5"/>
<circle cx="19" cy="521" r="2.6" fill="url(#lRed)"/>
<path d="M22.6 545.6H30.2L26.4 550Z" fill="#000"/><path d="M22.6 853H30.2L26.4 857.5Z" fill="#000"/>
<rect x="3.6" y="609.2" width="31.6" height="34.2" fill="#f8f8f8" stroke="#1c7fe0" stroke-width="1.5"/>
<path d="M17.1 611.5V641 M7.5 630.1H23.4" stroke="#2f3f55" stroke-width="1.7"/>
<ellipse cx="17.1" cy="630.1" rx="2.7" ry="3.1" fill="#fdfdfd" stroke="#34475f" stroke-width="1.5"/>
<ellipse cx="25.9" cy="616.5" rx="2.4" ry="3.1" fill="none" stroke="#34475f" stroke-width="1.5"/>
<path d="M24.7 630.1L30.1 625.8000000000001V634.4Z" fill="#2f3f55"/>
<path d="M9 678.3L27.1 657.2" stroke="#2f3f55" stroke-width="1.6"/>
<ellipse cx="9" cy="678.3" rx="2.7" ry="3.1" fill="#fdfdfd" stroke="#34475f" stroke-width="1.5"/>
<ellipse cx="18" cy="667.6" rx="2.7" ry="3.1" fill="#fdfdfd" stroke="#34475f" stroke-width="1.5"/>
<ellipse cx="27.1" cy="657.2" rx="2.7" ry="3.1" fill="#fdfdfd" stroke="#34475f" stroke-width="1.5"/>
<path d="M24 669.2L29.4 664.9000000000001V673.5Z" fill="#2f3f55"/>
<path d="M7.8 694L29.2 718.7 M29.2 694L7.8 718.7" stroke="#2f3f55" stroke-width="1.7"/>
<ellipse cx="18" cy="706.6" rx="2.7" ry="3.1" fill="#fdfdfd" stroke="#34475f" stroke-width="1.5"/>
<path d="M24 706.6L29.4 702.3000000000001V710.9Z" fill="#2f3f55"/>
<path d="M19.3 734.3V760.8" stroke="#9c9c9c" stroke-width="2.6"/><path d="M7.5 748.2H17" stroke="#111" stroke-width="1.7"/>
<ellipse cx="19.3" cy="748.2" rx="2.4" ry="3" fill="#fdfdfd" stroke="#34475f" stroke-width="1.5"/>
<path d="M24.4 748.2L29.799999999999997 743.9000000000001V752.5Z" fill="#2f3f55"/>
<path d="M8.7 777L29.2 799.3" stroke="#2f3f55" stroke-width="1.7"/>
<ellipse cx="14.2" cy="782.8" rx="3" ry="3.2" fill="#fdfdfd" stroke="#34475f" stroke-width="1.5"/>
<path d="M19.9 781.4L25.299999999999997 776.6V786.1999999999999Z" fill="#2f3f55"/>
<path d="M6 814.4H31" stroke="#111" stroke-width="1.5" stroke-dasharray="1.5 1.1"/>
<path d="M6 817.4H31" stroke="#111" stroke-width="1.5" stroke-dasharray="1.5 1.1"/>
<path d="M6 820.5H31" stroke="#111" stroke-width="1.5" stroke-dasharray="1.5 1.1"/>
<path d="M6 823.5H31" stroke="#111" stroke-width="1.5" stroke-dasharray="1.5 1.1"/>
<path d="M6 826.6H31" stroke="#111" stroke-width="1.5" stroke-dasharray="1.5 1.1"/>
<path d="M6 829.6H31" stroke="#111" stroke-width="1.5" stroke-dasharray="1.5 1.1"/>
<path d="M6 832.6H31" stroke="#111" stroke-width="1.5" stroke-dasharray="1.5 1.1"/>
<path d="M6 835.7H31" stroke="#111" stroke-width="1.5" stroke-dasharray="1.5 1.1"/>
<path d="M6 838.7H31" stroke="#111" stroke-width="1.5" stroke-dasharray="1.5 1.1"/>
<path d="M6 841.8H31" stroke="#111" stroke-width="1.5" stroke-dasharray="1.5 1.1"/>
<rect x="15.8" y="824.6" width="9" height="10" fill="#fbfbfb"/>
<ellipse cx="19.3" cy="829.6" rx="2.6" ry="3.3" fill="none" stroke="#3a5a8a" stroke-width="1.8"/>
<path d="M24.6 829.6L30.200000000000003 824.4V834.8000000000001Z" fill="#2f3f55"/>
<path d="M23.5 883.2L23.5 896.5L26.9 893.0L29.3 899.6L31.5 898.8L28.9 892.6L32.4 892.6Z" fill="#c9c9c9" stroke="#b0b0b0" stroke-width="0.8" stroke-linejoin="round"/>
<path d="M23.5 923.6L23.5 936.9L26.9 933.4L29.3 940.0L31.5 939.2L28.9 933.0L32.4 933.0Z" fill="#c9c9c9" stroke="#b0b0b0" stroke-width="0.8" stroke-linejoin="round"/>
<path d="M23.5 964.4L23.5 977.7L26.9 974.2L29.3 980.8L31.5 980.0L28.9 973.8L32.4 973.8Z" fill="#c9c9c9" stroke="#b0b0b0" stroke-width="0.8" stroke-linejoin="round"/>
<text x="6.2" y="909.3" font-family="Liberation Sans" font-size="17" fill="#bdbdbd" textLength="15.6" lengthAdjust="spacingAndGlyphs">all</text>
<text x="6.2" y="949.6" font-family="Liberation Sans" font-size="12.2" fill="#bdbdbd" textLength="15.6" lengthAdjust="spacingAndGlyphs">PS</text>
<text x="6.2" y="990.4" font-family="Liberation Sans" font-size="17" fill="#bdbdbd" textLength="15.6" lengthAdjust="spacingAndGlyphs">clr</text>
</svg>

<svg class="abs" style="left:0;top:1020px" width="1920" height="60" viewBox="0 1020 1920 60">
<defs>
<linearGradient id="tFolder" x1="0" y1="0" x2="0" y2="1"><stop offset="0" stop-color="#ffd976"/><stop offset="1" stop-color="#ffcf53"/></linearGradient>
<linearGradient id="tBlue" x1="0" y1="0" x2="0" y2="1"><stop offset="0" stop-color="#47a2e4"/><stop offset="1" stop-color="#2f86d2"/></linearGradient>
<linearGradient id="tPal" x1="0" y1="0" x2="1" y2="1"><stop offset="0" stop-color="#e4f2fa"/><stop offset="1" stop-color="#8fc0e2"/></linearGradient>
<linearGradient id="tStar" x1="0" y1="0" x2="1" y2="1"><stop offset="0" stop-color="#54748a"/><stop offset=".5" stop-color="#8fabbb"/><stop offset="1" stop-color="#4d6c82"/></linearGradient>
</defs>
<rect x="521" y="1020" width="73" height="60" fill="#fff" fill-opacity=".5"/><rect x="596" y="1020" width="73" height="60" fill="#fff" fill-opacity=".22"/>
<rect x="227" y="1077" width="61" height="3" fill="#0b70d2"/>
<rect x="377" y="1077" width="61" height="3" fill="#0b70d2"/>
<rect x="452" y="1077" width="61" height="3" fill="#0b70d2"/>
<rect x="521" y="1077" width="73" height="3" fill="#0b70d2"/>
<rect x="596" y="1077" width="73" height="3" fill="#0b70d2"/>
<path d="M23.9 1040.7L33.8 1039.3V1049H23.9Z M35 1039.1L48 1037.9V1049H35Z M23.9 1050.2H33.8V1059.8L23.9 1058.5Z M35 1050.2H48V1062L35 1060Z" fill="#000"/>
<circle cx="111.4" cy="1046.4" r="8.3" fill="none" stroke="#111" stroke-width="1.5"/><path d="M105.4 1052.4L96.4 1061.4" stroke="#111" stroke-width="1.6"/>
<g fill="none" stroke="#111" stroke-width="1.4"><rect x="168.3" y="1044.3" width="15.4" height="10.4"/><path d="M168.3 1038V1041.1H183.7V1038 M168.3 1061V1057.8H183.7V1061 M190.5 1038V1044.2 M190.5 1049.4V1061"/></g><rect x="189" y="1045.2" width="3" height="3" fill="#111"/>
<path d="M241 1038.4Q241 1037.2 242.2 1037.2H254.2L256.4 1039.4H271.6Q272.9 1039.4 272.9 1040.7V1060.6Q272.9 1061.9 271.6 1061.9H242.3Q241 1061.9 241 1060.6Z" fill="url(#tFolder)"/><path d="M241 1038.4Q241 1037.2 242.2 1037.2H254.2L256.4 1039.4L254.6 1041.2H241Z" fill="#e6a806"/>
<path d="M246.3 1052.4Q246.3 1051 247.7 1051H265.8Q267.2 1051 267.2 1052.4V1063H262.4V1056H251.1V1063H246.3Z" fill="url(#tBlue)"/>
<rect x="314" y="1032" width="36" height="36" rx="5.5" fill="#06b80b"/><ellipse cx="331.9" cy="1048.3" rx="13.6" ry="11.4" fill="#fff"/><path d="M329.6 1058.6Q330.6 1061.6 329.6 1063.6Q334.6 1061.6 338 1058Z" fill="#fff"/>
<text x="322.4" y="1051.7" font-family="Liberation Sans" font-weight="700" font-size="8.6" fill="#06a80a" textLength="19" lengthAdjust="spacingAndGlyphs">LINE</text>
<path d="M406.9 1050L391.31 1041.00A18 18 0 0 1 422.49 1041.00Z" fill="#e33e2b"/>
<path d="M406.9 1050L422.49 1041.00A18 18 0 0 1 406.90 1068.00Z" fill="#fbc116"/>
<path d="M406.9 1050L406.90 1068.00A18 18 0 0 1 391.31 1041.00Z" fill="#2da94f"/>
<path d="M406.9 1050L391.31 1041.00L411.05 1042.81Z" fill="#e33e2b" fill-opacity="0"/>
<path d="M406.90 1041.70L423.92 1044.14L422.49 1041.00L406.9 1050Z" fill="#e33e2b"/>
<path d="M414.09 1054.15L403.47 1067.67L406.90 1068.00L406.9 1050Z" fill="#fbc116"/>
<path d="M399.71 1054.15L393.32 1038.19L391.31 1041.00L406.9 1050Z" fill="#2da94f"/>
<circle cx="406.9" cy="1050" r="18" fill="none" stroke="#d3e2ea" stroke-width=".01"/>
<circle cx="406.9" cy="1050" r="8.4" fill="#fff"/><circle cx="406.9" cy="1050" r="6.8" fill="#3a7cec"/>
<clipPath id="wclip"><rect x="472.3" y="1034.1" width="26.8" height="31.5" rx="2"/></clipPath><g clip-path="url(#wclip)"><rect x="472" y="1034" width="28" height="8" fill="#41a5ee"/><rect x="472" y="1042" width="28" height="8" fill="#2b7cd3"/><rect x="472" y="1050" width="28" height="8" fill="#185abd"/><rect x="472" y="1058" width="28" height="8" fill="#103f91"/></g>
<rect x="464.6" y="1042" width="18" height="17.6" rx="1.6" fill="#0d2f6e" fill-opacity=".35"/><rect x="464" y="1041.2" width="18" height="17.6" rx="1.6" fill="#1a56b4"/><text x="473" y="1054.7" font-family="Liberation Sans" font-weight="700" font-size="13" fill="#fff" text-anchor="middle" textLength="12.6" lengthAdjust="spacingAndGlyphs">W</text>
<path d="M542.8 1032.1Q558.9 1046 575 1032.1Q563.5 1050 575 1067.9Q558.9 1054 542.8 1067.9Q554.3 1050 542.8 1032.1Z" fill="url(#tStar)" stroke="#4a697e" stroke-width=".8"/>
<path d="M546 1035Q558.9 1047.5 572 1035M546 1065Q558.9 1052.5 572 1065" fill="none" stroke="#3f5d72" stroke-width=".9" stroke-opacity=".8"/><path d="M556 1050H566" stroke="#3f5d72" stroke-width=".8"/>
<rect x="540.4" y="1041.6" width="18.6" height="18.6" fill="#24364a" fill-opacity=".45"/><rect x="539.4" y="1040.6" width="18.7" height="18.8" fill="#0f73dd"/><text x="548.8" y="1056.6" font-family="Liberation Sans" font-weight="700" font-size="18.5" fill="#fff" text-anchor="middle">S</text>
<g transform="rotate(-22 631.3 1051.3)"><path d="M616 1052C616 1044 623 1039.5 632 1039.5C641 1039.5 647 1044.5 647 1051.5C647 1058.5 641 1063.5 632.5 1063.5C627 1063.5 624.5 1061.5 625 1059C625.6 1056.4 623.5 1055.6 620.5 1056.4C617.5 1057.2 616 1055.5 616 1052Z" fill="url(#tPal)" stroke="#8ab4d4" stroke-width=".8"/></g>
<circle cx="629" cy="1053.6" r="2" fill="#f3f8fb" stroke="#9bbfd9" stroke-width=".6"/><circle cx="620.5" cy="1050.6" r="2.9" fill="#e23b2e"/><circle cx="625.6" cy="1045.4" r="2.9" fill="#46b83d"/><circle cx="632.9" cy="1042.9" r="2.9" fill="#f6a81c"/>
<path d="M632.3 1066.2L641.7 1041.8" stroke="#e67e1e" stroke-width="2.6" stroke-linecap="round"/><path d="M632.9 1065.4L641.2 1043.6" stroke="#f5a55a" stroke-width=".8"/><path d="M641 1043.5L642.6 1039.6" stroke="#8d97a3" stroke-width="2.8"/><path d="M641.6 1040L640.8 1033.4Q645.5 1032 649.8 1037L644.4 1041Z" fill="#c9a06a" stroke="#b48a55" stroke-width=".5"/>
<path d="M1601.4 1053.4L1610.1 1044.7L1618.8 1053.4" fill="none" stroke="#111" stroke-width="1.5"/>
<path d="M1657.4 1038Q1662 1041 1668.6 1041.6Q1669 1054.5 1657.4 1061.6Q1646 1054.5 1646.4 1041.6Q1653 1041 1657.4 1038Z" fill="#fff" stroke="#111" stroke-width="1.5" stroke-linejoin="round"/><path d="M1657.4 1038.6V1061 M1646.6 1049.2H1668.6" stroke="#111" stroke-width="1.3"/>
<path d="M1663.4 1048.6L1670.4 1061.9H1656.4Z" fill="#fcbf24" stroke="#fcbf24" stroke-width=".8" stroke-linejoin="round"/><path d="M1663.4 1053V1058" stroke="#111" stroke-width="1.3"/><rect x="1662.75" y="1059.2" width="1.3" height="1.3" fill="#111"/>
<text x="1692.2" y="1056.6" font-family="Liberation Sans" font-size="17.6" fill="#111" textLength="33.6" lengthAdjust="spacingAndGlyphs">ENG</text>
<text x="1767.2" y="1042.4" font-family="Liberation Sans" font-size="16.8" fill="#111" textLength="42.4" lengthAdjust="spacingAndGlyphs">13:39</text>
<text x="1751.4" y="1070.4" font-family="Liberation Sans" font-size="16.8" fill="#111" textLength="72.8" lengthAdjust="spacingAndGlyphs">6/1/2023</text>
<path d="M1858 1038H1882V1056.7H1872.4L1868.4 1061.6L1863 1056.7H1858Z" fill="#0a0a0a"/><path d="M1863 1043.6H1877 M1863 1047.6H1877 M1863 1051.6H1872" stroke="#fff" stroke-width="1.1"/><circle cx="1877" cy="1056.5" r="5.7" fill="#0a0a0a"/><circle cx="1877" cy="1056.5" r="4.9" fill="#fff"/><circle cx="1875.4" cy="1054.6" r="4.3" fill="#0a0a0a"/>
<rect x="1912.6" y="1020" width="1.2" height="60" fill="#8f98a8"/>
</svg>


</div>
</body>
</html>
